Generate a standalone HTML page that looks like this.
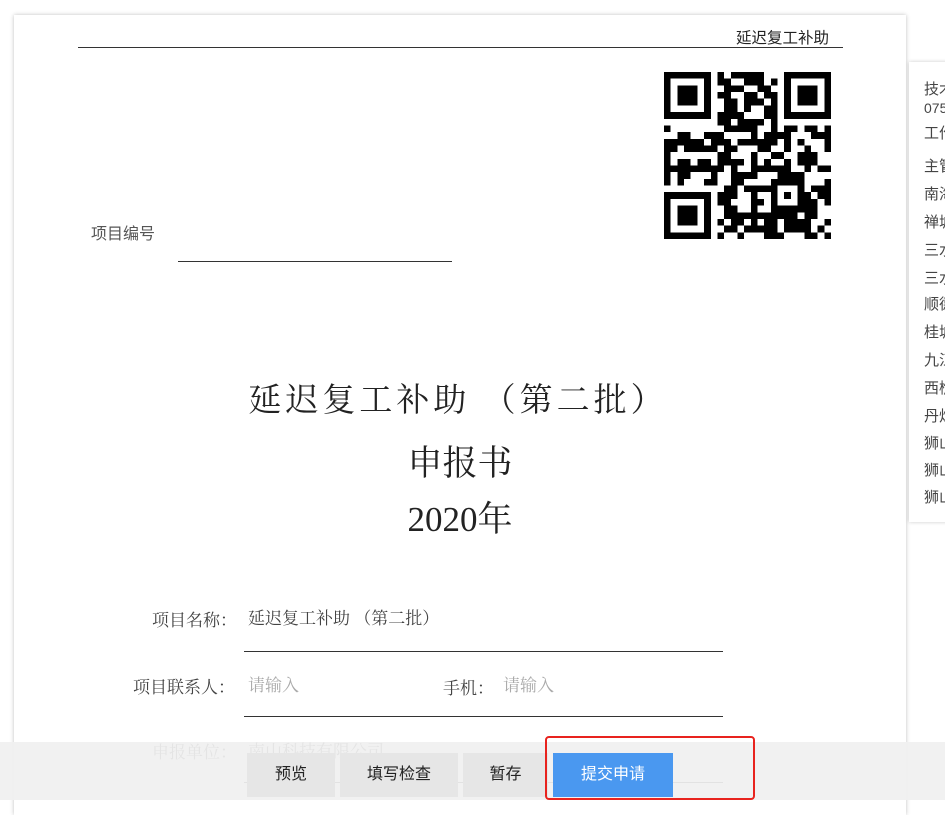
<!DOCTYPE html>
<html><head><meta charset="utf-8"><style>
body{margin:0;width:945px;height:800px;overflow:hidden;background:#fff;position:relative;font-family:"Liberation Serif","Noto Serif CJK SC",serif;color:#333}
.paper{position:absolute;left:14px;top:15px;width:892px;height:800px;background:#fff;box-shadow:0 0 4px rgba(0,0,0,.25)}
.abs{position:absolute}
.sans{font-family:"Liberation Sans","Noto Sans CJK SC",sans-serif}
.panel{position:absolute;left:909px;top:62px;width:60px;height:460px;background:#fff;box-shadow:0 0 4px rgba(0,0,0,.2);font-family:"Liberation Sans","Noto Sans CJK SC",sans-serif;font-size:15px;color:#444}
.panel div{position:absolute;left:15px;white-space:nowrap}
.bar{position:absolute;left:0;top:742px;width:945px;height:58px;background:rgba(240,240,240,.93)}
.btn{position:absolute;top:753px;height:44px;background:#e6e6e6;font-family:"Liberation Sans","Noto Sans CJK SC",sans-serif;font-size:16px;color:#222;text-align:center;line-height:44px}
</style></head><body>
<div class="paper"></div>
<div class="abs sans" style="left:736px;top:26px;font-size:15.5px;color:#222">延迟复工补助</div>
<div class="abs" style="left:78px;top:47px;width:765px;height:1px;background:#333"></div>
<svg class="abs" style="left:664px;top:71px" width="167" height="169" viewBox="0 0 25 25" shape-rendering="crispEdges" id="qr"></svg>
<div class="abs sans" style="left:91px;top:220px;font-size:16px;color:#555">项目编号</div>
<div class="abs" style="left:178px;top:261px;width:274px;height:1px;background:#333"></div>
<div class="abs" style="left:0;width:916px;top:374px;text-align:center;font-size:33px;color:#222;letter-spacing:4px">延迟复工补助 （第二批）</div>
<div class="abs" style="left:0;width:920px;top:436px;text-align:center;font-size:35px;color:#222">申报书</div>
<div class="abs" style="left:0;width:920px;top:492px;text-align:center;font-size:35px;color:#222">2020年</div>
<div class="abs" style="left:152px;top:606px;font-size:17px;color:#444">项目名称：</div>
<div class="abs" style="left:248px;top:604px;font-size:17px;color:#444">延迟复工补助 （第二批）</div>
<div class="abs" style="left:244px;top:651px;width:479px;height:1px;background:#333"></div>
<div class="abs" style="left:133px;top:673px;font-size:17px;color:#444">项目联系人：</div>
<div class="abs" style="left:248px;top:671px;font-size:17px;color:#aaa">请输入</div>
<div class="abs" style="left:443px;top:674px;font-size:17px;color:#444">手机：</div>
<div class="abs" style="left:503px;top:671px;font-size:17px;color:#aaa">请输入</div>
<div class="abs" style="left:244px;top:716px;width:479px;height:1px;background:#333"></div>
<div class="abs" style="left:152px;top:738px;font-size:17px;color:#444">申报单位：</div>
<div class="abs" style="left:248px;top:737px;font-size:17px;color:#444">南山科技有限公司</div>
<div class="abs" style="left:244px;top:782px;width:479px;height:1px;background:#333"></div>
<div class="panel">
<div style="top:16px">技术</div><div style="top:38px;font-size:14px">0757</div><div style="top:60px">工作</div>
<div style="top:93px">主管</div><div style="top:121px">南海</div><div style="top:149px">禅城</div>
<div style="top:177px">三水</div><div style="top:205px">三水</div><div style="top:231px">顺德</div>
<div style="top:259px">桂城</div><div style="top:287px">九江</div><div style="top:315px">西樵</div>
<div style="top:343px">丹灶</div><div style="top:370px">狮山</div><div style="top:397px">狮山</div><div style="top:424px">狮山</div>
</div>
<div class="bar"></div>
<div class="btn" style="left:247px;width:88px">预览</div>
<div class="btn" style="left:340px;width:118px">填写检查</div>
<div class="btn" style="left:463px;width:85px">暂存</div>
<div class="btn" style="left:553px;width:120px;background:#4a98f0;color:#fff">提交申请</div>
<div class="abs" style="left:545px;top:736px;width:206px;height:60px;border:2px solid #e8231e;border-radius:4px"></div>
<script>
var s=document.getElementById('qr'),h='';
function r(x,y,w,hh){h+='<rect x="'+x+'" y="'+y+'" width="'+w+'" height="'+hh+'"/>';}
[[0,0],[18,0],[0,18]].forEach(function(p){r(p[0],p[1],7,7);h+='<rect x="'+(p[0]+1)+'" y="'+(p[1]+1)+'" width="5" height="5" fill="#fff"/>';r(p[0]+2,p[1]+2,3,3);});
var seed=7;function rnd(){seed=(seed*9301+49297)%233280;return seed/233280;}
for(var y=0;y<25;y++)for(var x=0;x<25;x++){if((x<8&&y<8)||(x>16&&y<8)||(x<8&&y>16))continue;if(rnd()<0.52)r(x,y,1,1);}
r(16,16,5,5);h+='<rect x="17" y="17" width="3" height="3" fill="#fff"/>';r(18,18,1,1);
s.innerHTML=h;
</script>
</body></html>
